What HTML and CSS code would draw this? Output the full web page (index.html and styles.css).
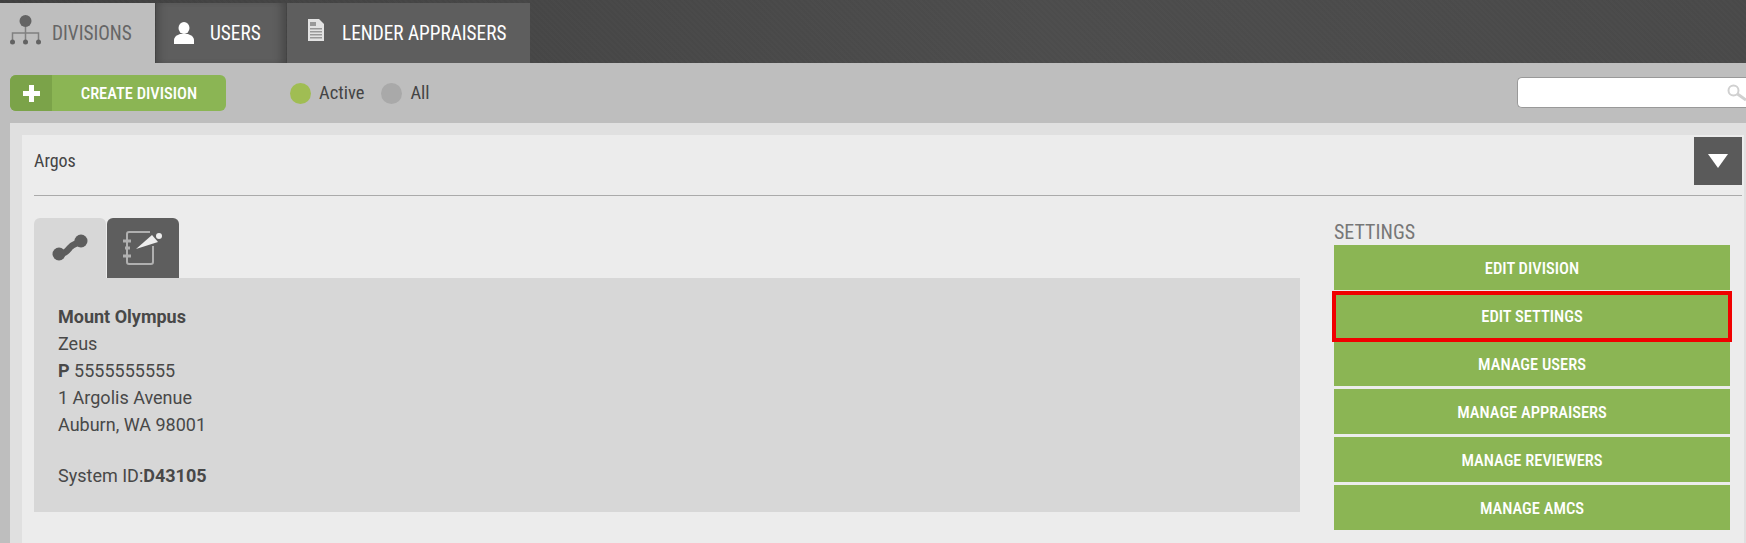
FILE: index.html
```html
<!DOCTYPE html>
<html lang="en">
<head>
<meta charset="utf-8">
<title>Divisions</title>
<link rel="stylesheet" href="styles.css">
</head>
<body>
<nav class="topbar">
  <a class="tab tab-active tab-divisions">
    <svg class="icon-org" width="31" height="30" viewBox="0 0 31 30"><path d="M15.500 10v17M2.500 26v-8h26v8" fill="none" stroke="#808080" stroke-width="1.500"/><circle cx="15.500" cy="6" r="6" fill="#636363"/><circle cx="2.500" cy="27" r="2.500" fill="#636363"/><circle cx="15.500" cy="27" r="2.500" fill="#636363"/><circle cx="28.500" cy="27" r="2.500" fill="#636363"/></svg>
    <span>DIVISIONS</span>
  </a>
  <a class="tab tab-users">
    <svg width="20" height="22" viewBox="0 0 20 22"><ellipse cx="10" cy="6" rx="5.500" ry="6" fill="#fff"/><path d="M0 22v-4q0-4 6-6h8q6 2 6 6v4z" fill="#fff"/></svg>
    <span>USERS</span>
  </a>
  <a class="tab tab-lender">
    <svg class="icon-doc" width="16" height="22" viewBox="0 0 16 22"><path d="M0 0h11l5 5v17H0z" fill="#e2e2e2"/><path d="M2 3h6v4H2zM2 9h12v1.500H2zM2 12h12v1.500H2zM2 15h12v1.500H2zM2 18h12v1.500H2z" fill="#999"/></svg>
    <span>LENDER APPRAISERS</span>
  </a>
</nav>
<div class="toolbar">
  <button class="create">
    <span class="create-plus"><svg width="17" height="17" viewBox="0 0 17 17"><path d="M6 0h5v6h6v5h-6v6H6v-6H0V6h6z" fill="#fff"/></svg></span>
    <span class="create-label">CREATE DIVISION</span>
  </button>
  <div class="filters">
    <span class="dot dot-on"></span><span class="filter">Active</span>
    <span class="dot"></span><span class="filter">All</span>
  </div>
  <div class="search">
    <svg width="19" height="18" viewBox="0 0 19 18"><circle cx="6.500" cy="6.500" r="5" fill="none" stroke="#d0d0d0" stroke-width="2"/><path d="M10.500 10l8.500 6" stroke="#d0d0d0" stroke-width="3"/></svg>
  </div>
</div>
<main class="outer">
  <section class="card">
    <header class="card-head">
      <span class="card-title">Argos</span>
      <button class="toggle"><svg width="20" height="14" viewBox="0 0 20 14"><path d="M0 0h20L10 14z" fill="#fff"/></svg></button>
    </header>
    <div class="card-body">
      <div class="main-col">
        <div class="subtabs">
          <div class="subtab subtab-active"><svg width="36" height="28" viewBox="0 0 36 28"><path d="M7 20C13 20 15 17 18 13.500C21 10 24 10 29 7" fill="none" stroke="#5d5d5d" stroke-width="6.500"/><circle cx="7" cy="20" r="6.500" fill="#5d5d5d"/><circle cx="29" cy="7" r="6.500" fill="#5d5d5d"/></svg></div>
          <div class="subtab subtab-notes"><svg width="40" height="36" viewBox="0 0 40 36"><path d="M27 2H6a2 2 0 0 0-2 2v28a2 2 0 0 0 2 2h22a2 2 0 0 0 2-2V16" fill="none" stroke="#b0b0b0" stroke-width="2"/><path d="M0 11h8M2 18h5M0 26h8" stroke="#b0b0b0" stroke-width="3"/><path d="M13 19L29 5l6 7z" fill="#eee"/><circle cx="36" cy="6" r="3" fill="#eee"/></svg></div>
        </div>
        <div class="panel">
          <p class="line"><b>Mount Olympus</b></p>
          <p class="line">Zeus</p>
          <p class="line"><b>P</b> 5555555555</p>
          <p class="line">1 Argolis Avenue</p>
          <p class="line">Auburn, WA 98001</p>
          <p class="line line-sys">System ID:<b>D43105</b></p>
        </div>
      </div>
      <aside class="settings">
        <h2 class="settings-title">SETTINGS</h2>
        <a class="action">EDIT DIVISION</a>
        <a class="action action-marked">EDIT SETTINGS</a>
        <a class="action">MANAGE USERS</a>
        <a class="action">MANAGE APPRAISERS</a>
        <a class="action">MANAGE REVIEWERS</a>
        <a class="action">MANAGE AMCS</a>
      </aside>
    </div>
  </section>
</main>
</body>
</html>
```
FILE: styles.css
```css
* { box-sizing: border-box; }
html, body { margin: 0; height: 100%; }
body {
  width: 1746px; height: 543px; overflow: hidden;
  background: #bebebe; color: #444;
  font-family: Roboto, "Liberation Sans", sans-serif;
}
.topbar {
  display: flex; height: 63px; padding-top: 3px; gap: 1px;
  background:
    repeating-linear-gradient(45deg, rgba(0,0,0,.03) 0 2px, transparent 2px 4px),
    linear-gradient(90deg, #424242, #4e4e4e 60%, #4b4b4b);
}
.tab {
  display: flex; align-items: center; height: 60px;
  font-size: 19.300px; font-stretch: 75%; color: #fff;
  background: #5e5e5e;
}
.tab-active { background: #bebebe; color: #666; }
.tab-divisions { width: 155px; padding-left: 10px; gap: 11px; }
.icon-org { margin-bottom: 6px; }
.tab-users {
  width: 130px; padding-left: 18px; gap: 16px;
  box-shadow: inset 8px 0 10px -6px rgba(0,0,0,.25), inset -10px 0 10px -6px rgba(0,0,0,.25);
}
.tab-lender { width: 243px; padding-left: 21px; gap: 18px; }
.icon-doc { margin-bottom: 6px; }
.toolbar {
  display: flex; align-items: center; height: 60px; padding-left: 10px;
}
.create {
  display: flex; align-items: stretch; width: 216px; height: 36px; padding: 0; border: 0;
  border-radius: 6px; overflow: hidden; background: #8bb554; color: #fff;
  font-family: inherit; font-size: 16.500px; font-weight: 500; font-stretch: 75%;
}
.create-plus {
  display: flex; align-items: center; justify-content: center;
  width: 42px; background: #7ba349;
}
.create-label { flex: 1; line-height: 37px; }
.filters { display: flex; align-items: center; margin-left: 64px; font-size: 18.500px; font-stretch: 75%; color: #444; }
.dot { width: 21px; height: 21px; border-radius: 50%; background: #a9a9a9; }
.dot-on { background: #a0bd53; }
.filter { margin-left: 8px; margin-right: 17px; }
.search {
  display: flex; align-items: center; justify-content: flex-end;
  width: 229px; height: 31px; margin-left: auto; margin-bottom: 1px; overflow: hidden;
  background: #fff; border: 1px solid #999; border-right: 0; border-radius: 5px 0 0 5px;
}
.outer { margin-left: 10px; padding: 12px 0 0 12px; background: #e0e0e0; height: 420px; }
.card { height: 100%; margin-right: 2px; padding: 0 2px 0 12px; background: #ececec; }
.card-head {
  display: flex; justify-content: space-between; align-items: flex-start;
  height: 61px; padding-top: 2px; border-bottom: 1px solid #aaa;
}
.card-title { font-size: 18px; font-stretch: 87%; color: #444; margin-top: 13px; }
.toggle { display: flex; align-items: center; justify-content: center; width: 48px; height: 48px; padding: 0; border: 0; background: #5a5a5a; }
.card-body { display: flex; padding-top: 22px; }
.main-col { width: 1266px; }
.subtabs { display: flex; gap: 1px; height: 60px; }
.subtab { display: flex; align-items: center; justify-content: center; width: 72px; height: 60px; border-radius: 6px 6px 0 0; }
.subtab-active { background: #d7d7d7; }
.subtab-notes { background: #5e5e5e; }
.panel { height: 234px; padding: 25px 24px; background: #d7d7d7; }
.line { margin: 0; font-size: 18px; font-stretch: 96%; line-height: 27px; color: #484848; }
.line-sys { margin-top: 24px; }
.settings { width: 396px; margin-left: 34px; margin-top: -1px; }
.settings-title { margin: 0; height: 28px; font-size: 20px; line-height: 30px; font-weight: 400; font-stretch: 75%; color: #777; }
.action {
  position: relative;
  display: block; height: 45px; margin-bottom: 3px; text-align: center;
  font-size: 16.500px; font-weight: 500; line-height: 47px; font-stretch: 75%; color: #fff; background: #8bb554;
}
.action-marked::after {
  content: ""; position: absolute; top: -2px; left: -2px; right: -2px; bottom: -4px; z-index: 1;
  border: 4px solid #f00000;
}
```
